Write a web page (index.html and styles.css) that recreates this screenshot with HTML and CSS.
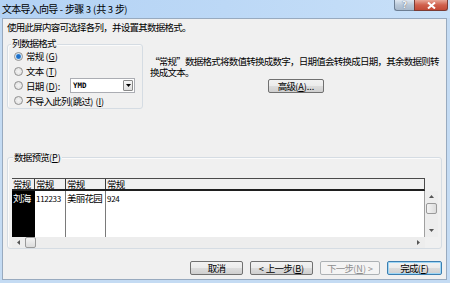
FILE: index.html
```html
<!DOCTYPE html>
<html lang="zh-CN">
<head>
<meta charset="utf-8">
<title>文本导入向导 - 步骤 3 (共 3 步)</title>
<link rel="stylesheet" href="styles.css">
</head>
<body>
<div class="window">
  <div class="titlebar">
    <span class="title">文本导入向导<span class="en"> - </span>步骤<span class="en"> 3 (</span>共<span class="en"> 3 </span>步<span class="en">)</span></span>
    <div class="controls">
      <span class="btn-help">?</span>
      <span class="btn-close"><svg width="9" height="7" viewBox="0 0 9 7"><path d="M1 0.5 L8 6.5 M8 0.5 L1 6.5" stroke="#fff" stroke-width="2"/></svg></span>
    </div>
  </div>
  <div class="client">
    <p class="intro">使用此屏内容可选择各列，并设置其数据格式。</p>
    <div class="top">
      <div class="group format">
        <div class="group-label">列数据格式</div>
        <div class="radio-row"><span class="radio checked"></span><span>常规<span class="en"> (<u>G</u>)</span></span></div>
        <div class="radio-row"><span class="radio"></span><span>文本<span class="en"> (<u>T</u>)</span></span></div>
        <div class="radio-row"><span class="radio"></span><span>日期<span class="en"> (<u>D</u>):</span></span>
          <div class="combo"><span class="combo-val">YMD</span><span class="combo-btn"><svg width="5" height="3" viewBox="0 0 5 3"><path d="M0 0 H5 L2.5 3 Z" fill="#000"/></svg></span></div>
        </div>
        <div class="radio-row"><span class="radio"></span><span>不导入此列<span class="en">(</span>跳过<span class="en">) (<u>I</u>)</span></span></div>
      </div>
      <div class="desc">
        <p class="desc-text">“常规”数据格式将数值转换成数字，日期值会转换成日期，其余数据则转<br>换成文本。</p>
        <button class="btn adv">高级<span class="en">(<u>A</u>)...</span></button>
      </div>
    </div>
    <div class="group preview">
      <div class="group-label">数据预览<span class="en">(<u>P</u>)</span></div>
      <div class="grid">
        <div class="head">
          <span class="cell c1">常规</span><span class="cell c2">常规</span><span class="cell c3">常规</span><span class="cell c4">常规</span>
        </div>
        <div class="corner"></div>
        <div class="body">
          <span class="cell c1">刘海</span><span class="cell c2 en">112233</span><span class="cell c3">美丽花园</span><span class="cell c4 en">924</span>
        </div>
        <div class="vscroll">
          <svg class="arrow" width="5" height="3" viewBox="0 0 5 3"><path d="M0 3 H5 L2.5 0 Z" fill="#555"/></svg>
          <span class="vthumb"></span>
          <svg class="arrow down" width="5" height="3" viewBox="0 0 5 3"><path d="M0 0 H5 L2.5 3 Z" fill="#555"/></svg>
        </div>
        <div class="hscroll">
          <svg class="arrow" width="3" height="5" viewBox="0 0 3 5"><path d="M3 0 V5 L0 2.5 Z" fill="#555"/></svg>
          <span class="hthumb"></span>
          <svg class="arrow right" width="3" height="5" viewBox="0 0 3 5"><path d="M0 0 V5 L3 2.5 Z" fill="#555"/></svg>
        </div>
        <div class="corner"></div>
      </div>
    </div>
    <div class="buttons">
      <button class="btn cancel">取消</button>
      <button class="btn prev"><span class="en">&lt; </span>上一步<span class="en">(<u>B</u>)</span></button>
      <button class="btn next" disabled>下一步<span class="en">(<u>N</u>) &gt;</span></button>
      <button class="btn finish">完成<span class="en">(<u>F</u>)</span></button>
    </div>
  </div>
</div>
</body>
</html>
```
FILE: styles.css
```css
html, body {
  margin: 0;
  padding: 0;
}
body {
  width: 450px;
  height: 283px;
  overflow: hidden;
  font-family: "Noto Sans CJK SC", "Noto Sans", sans-serif;
  font-size: 9.5px;
  letter-spacing: -0.75px;
  color: #000;
}
.en {
  letter-spacing: 0;
  font-size: 9px;
}
u { text-decoration: underline; }
p { margin: 0; }

.window {
  width: 450px;
  height: 283px;
  background: #c4dbf3;
  display: flex;
  flex-direction: column;
}

.titlebar {
  height: 18px;
  flex: none;
  display: flex;
  justify-content: space-between;
  align-items: flex-start;
  background: linear-gradient(90deg, #b3d2f4, #bcd8f6 50%, #c8e0f8);
}
.title {
  padding-left: 2px;
  line-height: 17px;
  font-size: 10px;
}
.title .en { font-size: 9.5px; }
.controls {
  display: flex;
  margin-right: 2px;
}
.btn-help {
  width: 20px;
  height: 11px;
  box-sizing: border-box;
  border: 1px solid #6d7f94;
  border-top: none;
  border-right: none;
  border-radius: 0 0 0 3px;
  background: linear-gradient(#dfe8f1, #b9c8d8 50%, #a9b9cb);
  color: #eef3f8;
  font: bold 9px "DejaVu Sans", sans-serif;
  letter-spacing: 0;
  text-align: center;
  line-height: 10px;
  text-shadow: 0 0 1px #445;
}
.btn-close {
  width: 34px;
  height: 11px;
  box-sizing: border-box;
  border: 1px solid #7b3c34;
  border-top: none;
  border-radius: 0 0 3px 0;
  background: linear-gradient(#e8a797, #d0604c 50%, #c24a36);
  display: flex;
  align-items: center;
  justify-content: center;
}

.client {
  flex: 1;
  margin: 0 3px 3px 2px;
  background: #f0f0f0;
  border: 1px solid #98aabf;
  padding: 0 4px;
  display: flex;
  flex-direction: column;
}

.intro {
  margin-top: 2px;
  line-height: 13px;
}

.top {
  display: flex;
  gap: 7px;
  margin-top: 10px;
}

.group {
  border: 1px solid #d5dce3;
  border-radius: 3px;
  box-shadow: inset 1px 1px 0 #fbfbfb;
  display: flex;
  flex-direction: column;
  box-sizing: border-box;
}
.group-label {
  align-self: flex-start;
  background: #f0f0f0;
  line-height: 12px;
  padding: 0 1px;
}

.format {
  width: 136px;
  height: 65px;
  padding-left: 6px;
}
.format .group-label {
  margin: -8px 0 0 -3px;
}
.radio-row {
  display: flex;
  align-items: center;
  height: 15px;
  white-space: nowrap;
}
.radio-row:first-of-type { margin-top: -1px; }
.radio {
  width: 9px;
  height: 9px;
  box-sizing: border-box;
  border-radius: 50%;
  border: 1px solid #8f8f8f;
  background: radial-gradient(circle at 50% 50%, #f4f4f4, #dcdcdc);
  margin-right: 3px;
  flex: none;
}
.radio.checked {
  background: radial-gradient(circle, #1e6fc8 0 1.8px, #8cc0ee 2.6px, #eef4fa 3.2px);
}
.combo {
  margin-left: auto;
  margin-right: 7px;
  width: 65px;
  height: 15px;
  box-sizing: border-box;
  border: 1px solid #abadb3;
  background: #fff;
  display: flex;
  align-items: center;
}
.combo-val {
  flex: 1;
  padding-left: 2px;
  font: bold 7.5px "DejaVu Sans Mono", monospace;
  letter-spacing: 0;
}
.combo-btn {
  width: 10px;
  height: 11px;
  margin-right: 1px;
  box-sizing: border-box;
  border: 1px solid #8a8a8a;
  border-radius: 1px;
  background: linear-gradient(#f6f6f6, #dedede);
  display: flex;
  align-items: center;
  justify-content: center;
}

.desc {
  flex: 1;
  display: flex;
  flex-direction: column;
  padding-top: 12px;
}
.desc-text {
  line-height: 11px;
  white-space: nowrap;
}

.btn {
  font-family: inherit;
  font-size: 9.5px;
  letter-spacing: -0.75px;
  height: 14px;
  line-height: 12px;
  padding: 0;
  margin: 0;
  box-sizing: border-box;
  border: 1px solid #707070;
  border-radius: 2px;
  background: linear-gradient(#f2f2f2, #ebebeb 50%, #dddddd 50%, #cfcfcf);
  color: #000;
  white-space: nowrap;
}
.adv {
  align-self: center;
  width: 56px;
  margin-top: 1px;
}

.preview {
  margin-top: 48px;
  height: 92px;
  padding-left: 4px;
}
.preview .group-label {
  margin: -7px 0 0 1px;
}

.grid {
  margin-top: 14px;
  display: grid;
  grid-template-columns: 413px 13px;
  grid-template-rows: 13px 46px 11px;
}
.head {
  display: flex;
  border-top: 1px solid #4a4a4a;
  border-bottom: 2px solid #1f1f1f;
  border-right: 1px solid #4a4a4a;
  box-sizing: border-box;
  line-height: 10px;
}
.head .cell {
  border-right: 1px solid #3a3a3a;
}
.cell {
  box-sizing: border-box;
  padding-left: 1px;
  white-space: nowrap;
  flex: none;
}
.c1 { width: 23px; }
.c2 { width: 31px; }
.c3 { width: 40px; }
.c4 { flex: 1; border-right: none !important; }
.body {
  display: flex;
  background: #fff;
  line-height: 13px;
  border-right: 1px solid #a0a0a0;
}
.body .cell { border-right: 1px solid #7a7a7a; padding-top: 1px; }
.body .c1 {
  background: #000;
  color: #fff;
  border-right: none;
  width: 23px;
}
.body .en { font-size: 8px; letter-spacing: -0.3px; }

.vscroll {
  background: #ededed;
  display: flex;
  flex-direction: column;
  align-items: center;
}
.vscroll .arrow { margin-top: 4px; }
.vthumb {
  width: 11px;
  height: 11px;
  margin-top: 5px;
  box-sizing: border-box;
  border: 1px solid #9a9a9a;
  border-radius: 2px;
  background: linear-gradient(90deg, #f4f4f4, #dcdcdc);
}
.vscroll .down { margin-top: auto; margin-bottom: 5px; }

.hscroll {
  background: #ededed;
  display: flex;
  align-items: center;
}
.hscroll .arrow { margin-left: 5px; }
.hthumb {
  width: 11px;
  height: 11px;
  margin-left: 5px;
  box-sizing: border-box;
  border: 1px solid #9a9a9a;
  border-radius: 2px;
  background: linear-gradient(#f4f4f4, #dcdcdc);
}
.hscroll .right { margin-left: auto; margin-right: 5px; }

.buttons {
  display: flex;
  justify-content: flex-end;
  gap: 7px;
  margin-top: 12px;
}
.cancel { width: 53px; }
.prev { width: 63px; }
.next {
  width: 60px;
  border-color: #adb2b5;
  background: #f4f4f4;
  color: #8d8d8d;
}
.finish {
  width: 55px;
  border-color: #3c7fb1;
  box-shadow: inset 0 0 0 1px #9fd6f5;
}
```
